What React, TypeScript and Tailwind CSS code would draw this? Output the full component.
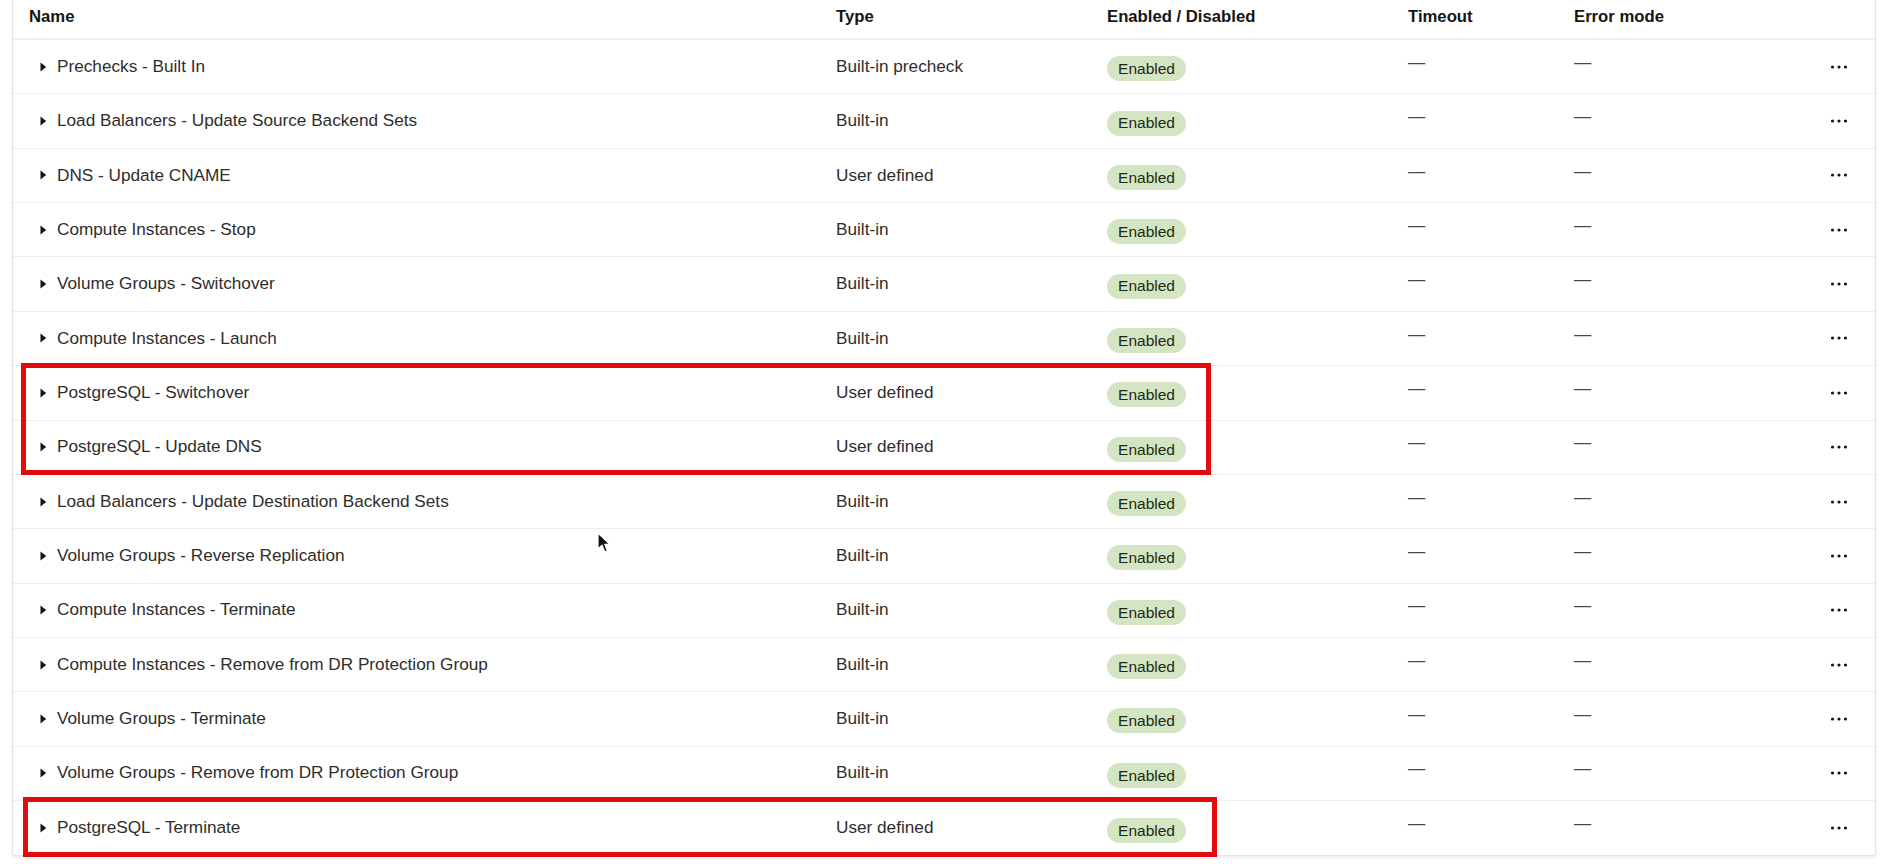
import React from "react";

const rows: { name: string; type: string }[] = [
  { name: "Prechecks - Built In", type: "Built-in precheck" },
  { name: "Load Balancers - Update Source Backend Sets", type: "Built-in" },
  { name: "DNS - Update CNAME", type: "User defined" },
  { name: "Compute Instances - Stop", type: "Built-in" },
  { name: "Volume Groups - Switchover", type: "Built-in" },
  { name: "Compute Instances - Launch", type: "Built-in" },
  { name: "PostgreSQL - Switchover", type: "User defined" },
  { name: "PostgreSQL - Update DNS", type: "User defined" },
  { name: "Load Balancers - Update Destination Backend Sets", type: "Built-in" },
  { name: "Volume Groups - Reverse Replication", type: "Built-in" },
  { name: "Compute Instances - Terminate", type: "Built-in" },
  { name: "Compute Instances - Remove from DR Protection Group", type: "Built-in" },
  { name: "Volume Groups - Terminate", type: "Built-in" },
  { name: "Volume Groups - Remove from DR Protection Group", type: "Built-in" },
  { name: "PostgreSQL - Terminate", type: "User defined" },
];

function Caret() {
  return (
    <svg width="7" height="10" viewBox="0 0 7 10" className="shrink-0">
      <path d="M0.5 0.5 L6.2 5 L0.5 9.5 Z" fill="#161513" />
    </svg>
  );
}

function Dots() {
  return (
    <svg width="18" height="4" viewBox="0 0 18 4">
      <circle cx="2.5" cy="2" r="1.6" fill="#161513" />
      <circle cx="9" cy="2" r="1.6" fill="#161513" />
      <circle cx="15.5" cy="2" r="1.6" fill="#161513" />
    </svg>
  );
}

export default function App() {
  return (
    <div
      className="relative w-full h-[866px] bg-white overflow-hidden text-[17.2px] text-[#2f2d2b]"
      style={{ fontFamily: '"Liberation Sans", Arial, sans-serif' }}
    >
      <div className="ml-[12px] w-[1864px] border-x border-b border-[#e4e3e1] rounded-b-[3px] shadow-[0_2px_3px_rgba(0,0,0,0.08)] bg-white">
        <div className="grid grid-cols-[823px_271px_301px_166px_1fr_80px] h-[40px] items-center pb-[4px] border-b-2 border-[#f1f0ef] font-bold text-[16.7px] text-[#161513]">
          <div className="pl-[16px]">Name</div>
          <div>Type</div>
          <div>Enabled / Disabled</div>
          <div>Timeout</div>
          <div>Error mode</div>
          <div></div>
        </div>
        {rows.map((r, i) => (
          <div
            key={i}
            className={
              "grid grid-cols-[823px_271px_301px_166px_1fr_80px] h-[54.36px] items-center " +
              (i < rows.length - 1 ? "border-b border-[#efeeed]" : "")
            }
          >
            <div className="pl-[27px] flex items-center gap-[10px]">
              <Caret />
              <span>{r.name}</span>
            </div>
            <div>{r.type}</div>
            <div className="flex">
              <span className="relative top-[2px] inline-flex items-center justify-center w-[79px] h-[25px] rounded-full bg-[#d3e5c2] text-[15.5px] text-[#1e2a14]">
                Enabled
              </span>
            </div>
            <div className="relative -top-[4px] text-[#4a4846]">—</div>
            <div className="relative -top-[4px] text-[#4a4846]">—</div>
            <div className="flex justify-end pr-[27px]">
              <Dots />
            </div>
          </div>
        ))}
      </div>

      {/* annotation boxes */}
      <div className="absolute left-[21px] top-[363px] w-[1190px] h-[112px] border-[5px] border-[#e30b0b]" />
      <div className="absolute left-[23px] top-[797px] w-[1194px] h-[60px] border-[5px] border-[#e30b0b]" />

      {/* mouse cursor */}
      <svg className="absolute left-[597px] top-[532px]" width="14" height="22" viewBox="0 0 14 22">
        <path
          d="M1 1 L1 17 L5 13.2 L7.8 19.8 L10.4 18.7 L7.7 12.3 L12.8 12.3 Z"
          fill="#111"
          stroke="#fff"
          strokeWidth="1.2"
          strokeLinejoin="round"
        />
      </svg>
    </div>
  );
}
